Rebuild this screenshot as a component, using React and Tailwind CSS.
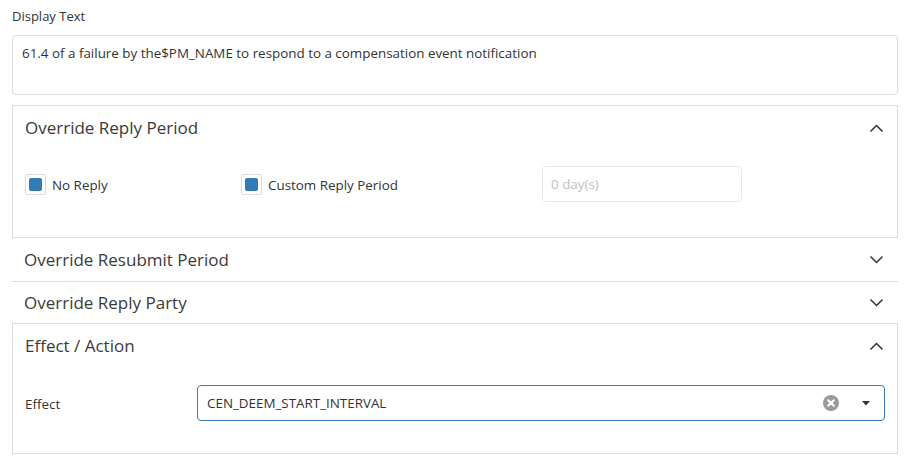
import React from "react";

const ChevronUp = () => (
  <svg width="15" height="9" viewBox="0 0 15 9" fill="none">
    <path d="M1.5 7.5 L7.5 1.5 L13.5 7.5" stroke="#333" strokeWidth="1.5" />
  </svg>
);
const ChevronDown = () => (
  <svg width="15" height="9" viewBox="0 0 15 9" fill="none">
    <path d="M1.5 1.5 L7.5 7.5 L13.5 1.5" stroke="#333" strokeWidth="1.5" />
  </svg>
);

const Check = ({ label }) => (
  <div className="flex items-center">
    <div className="w-[21px] h-[21px] border border-[#dcdcdc] rounded-[2px] flex items-center justify-center bg-white">
      <div className="w-[13px] h-[13px] rounded-[2px] bg-[#337ab7]" />
    </div>
    <span className="ml-[6px] text-[13.4px] text-[#333] relative top-[1px]">{label}</span>
  </div>
);

export default function App() {
  return (
    <div
      className="w-[914px] h-[468px] bg-white pl-3 pr-4 text-[#333] overflow-hidden"
      style={{ fontFamily: '"Open Sans", "Noto Sans", sans-serif' }}
    >
      <div className="pt-[7px] text-[13px] leading-[18px]">Display Text</div>
      <div className="mt-[10px] h-[60px] border border-[#dcdcdc] rounded-[4px] px-[9px] pt-[8px] text-[13.4px] leading-[18px]">
        61.4 of a failure by the$PM_NAME to respond to a compensation event notification
      </div>

      <div className="mt-[10px] border border-[#dcdcdc]">
        <div className="h-[44px] flex items-center justify-between pl-3 pr-[13px]">
          <span className="text-[17px] text-[#3a3a3a]">Override Reply Period</span>
          <ChevronUp />
        </div>
        <div className="px-3 pt-[16px] pb-[35px] flex items-center">
          <div className="w-[216px]">
            <Check label="No Reply" />
          </div>
          <div className="w-[301px]">
            <Check label="Custom Reply Period" />
          </div>
          <div className="w-[200px] h-[36px] border border-[#e6e6e6] rounded-[4px] flex items-center px-[8px] text-[13.4px] text-[#c0c0c0]">
            0 day(s)
          </div>
        </div>
      </div>

      <div className="h-[44px] border-b border-[#dcdcdc] flex items-center justify-between pl-3 pr-[14px]">
        <span className="text-[17px] text-[#3a3a3a]">Override Resubmit Period</span>
        <ChevronDown />
      </div>
      <div className="h-[41px] flex items-center justify-between pl-3 pr-[14px]">
        <span className="text-[17px] text-[#3a3a3a]">Override Reply Party</span>
        <ChevronDown />
      </div>

      <div className="border border-[#dcdcdc]">
        <div className="h-[44px] flex items-center justify-between pl-3 pr-[13px]">
          <span className="text-[17px] text-[#3a3a3a]">Effect / Action</span>
          <ChevronUp />
        </div>
        <div className="px-3 pt-[17px] pb-[32px] flex items-center">
          <div className="w-[172px] text-[13.4px] relative top-[1px]">Effect</div>
          <div className="flex-1 h-[36px] border border-[#3a7dbf] rounded-[4px] flex items-center pl-[9px] pr-[14px] text-[13.4px]">
            <span className="flex-1">CEN_DEEM_START_INTERVAL</span>
            <svg width="16" height="16" viewBox="0 0 16 16">
              <circle cx="8" cy="8" r="8" fill="#9a9a9a" />
              <path d="M5.2 5.2 L10.8 10.8 M10.8 5.2 L5.2 10.8" stroke="#fff" strokeWidth="2" strokeLinecap="round" />
            </svg>
            <svg className="ml-[23px]" width="8" height="5" viewBox="0 0 8 5">
              <path d="M0 0 L8 0 L4 4.5 Z" fill="#333" />
            </svg>
          </div>
        </div>
      </div>
    </div>
  );
}
